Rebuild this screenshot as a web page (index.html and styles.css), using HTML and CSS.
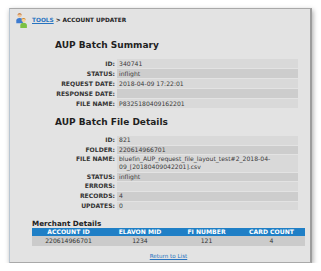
FILE: index.html
```html
<!DOCTYPE html>
<html>
<head>
<meta charset="utf-8">
<link rel="stylesheet" href="styles.css">
</head>
<body>
<div class="panel">
  <div class="crumbs">
    <svg class="icon" width="12" height="15" viewBox="0 0 12 15">
      <circle cx="3.6" cy="2.3" r="2.1" fill="#f1c79b"/>
      <path d="M1.5 2.2 Q1.6 0.2 3.6 0.2 Q5.6 0.2 5.7 2.2 Q4.6 1.2 3.6 1.4 Q2.4 1.2 1.5 2.2Z" fill="#b5652a"/>
      <path d="M0.3 10.2 V7.6 Q0.3 4.9 3.6 4.9 Q6.9 4.9 6.9 7.6 V10.2 Z" fill="#3d7bd0"/>
      <circle cx="7.6" cy="7" r="2.1" fill="#f6cf98"/>
      <path d="M5.5 6.9 Q5.6 4.9 7.6 4.9 Q9.6 4.9 9.7 6.9 Q8.6 5.9 7.6 6.1 Q6.4 5.9 5.5 6.9Z" fill="#d08a2c"/>
      <path d="M4.3 15 V12.4 Q4.3 9.7 7.6 9.7 Q10.9 9.7 10.9 12.4 V15 Z" fill="#7cc144"/>
    </svg>
    <span class="crumb-text"><a class="crumb-link" href="#">TOOLS</a> &gt; ACCOUNT UPDATER</span>
  </div>

  <h1 class="title title-first">AUP Batch Summary</h1>
  <div class="details">
    <div class="label">ID:</div><div class="value light">340741</div>
    <div class="label">STATUS:</div><div class="value dark">inflight</div>
    <div class="label">REQUEST DATE:</div><div class="value light">2018-04-09 17:22:01</div>
    <div class="label">RESPONSE DATE:</div><div class="value dark"></div>
    <div class="label">FILE NAME:</div><div class="value light">P8325180409162201</div>
  </div>

  <h1 class="title title-second">AUP Batch File Details</h1>
  <div class="details details-file">
    <div class="label">ID:</div><div class="value light">821</div>
    <div class="label">FOLDER:</div><div class="value dark">220614966701</div>
    <div class="label">FILE NAME:</div><div class="value light wrap">bluefin_AUP_request_file_layout_test#2_2018-04-09_[20180409042201].csv</div>
    <div class="label">STATUS:</div><div class="value dark">inflight</div>
    <div class="label">ERRORS:</div><div class="value light"></div>
    <div class="label">RECORDS:</div><div class="value dark">4</div>
    <div class="label">UPDATES:</div><div class="value light">0</div>
  </div>

  <div class="merchant">
    <h2 class="merchant-title">Merchant Details</h2>
    <table class="mtable">
      <colgroup><col class="c1"><col class="c2"><col class="c3"><col class="c4"></colgroup>
      <thead>
        <tr><th>ACCOUNT ID</th><th>ELAVON MID</th><th>FI NUMBER</th><th>CARD COUNT</th></tr>
      </thead>
      <tbody>
        <tr><td>220614966701</td><td>1234</td><td>121</td><td>4</td></tr>
      </tbody>
    </table>
    <div class="return"><a class="return-link" href="#">Return to List</a></div>
  </div>
</div>
</body>
</html>
```

FILE: styles.css
```css
html, body {
  margin: 0;
  padding: 0;
  background: #ffffff;
}
body {
  padding: 8px 0 0 9px;
  font-family: "DejaVu Sans", Verdana, sans-serif;
  color: #2a2a2a;
}
.panel {
  box-sizing: border-box;
  width: 303px;
  height: 255px;
  background: #e3e3e3;
  border: 1px solid #a9a9a9;
  border-right: 2px solid #9d9d9d;
  border-left-color: #b9c6d2;
  box-shadow: 1px 2px 5px rgba(0, 0, 0, 0.35);
  overflow: hidden;
}
.crumbs {
  display: flex;
  align-items: center;
  padding: 4px 0 0 6px;
  height: 15px;
}
.icon {
  display: block;
  flex: none;
}
.crumb-text {
  margin-left: 4px;
  font-size: 5.8px;
  font-weight: bold;
  color: #222;
  margin-top: -1px;
}
.crumb-link {
  color: #2773c0;
}
.title {
  margin: 0;
  font-size: 9px;
  line-height: 11px;
  font-weight: bold;
  color: #1f1f1f;
  padding-left: 45px;
}
.title-first {
  margin-top: 12px;
}
.title-second {
  margin-top: 9px;
}
.details {
  display: grid;
  grid-template-columns: 59px 181px;
  column-gap: 2px;
  row-gap: 1px;
  margin: 8px 0 0 46px;
  font-size: 6.1px;
  line-height: 9px;
}
.details-file {
  line-height: 8.6px;
}
.label {
  text-align: right;
  font-weight: bold;
  color: #333;
}
.value {
  padding-left: 2px;
  color: #3a3a3a;
  min-height: 8.6px;
}
.wrap {
  line-height: 8px;
  padding-top: 0.3px;
  padding-bottom: 0.3px;
}
.light {
  background: #d9d9d9;
}
.dark {
  background: #cdcdcd;
}
.merchant {
  margin: 9px 0 0 22px;
  width: 273px;
}
.merchant-title {
  margin: 0;
  font-size: 7.2px;
  line-height: 9px;
  font-weight: bold;
  color: #1f1f1f;
}
.mtable {
  width: 273px;
  border-collapse: collapse;
  table-layout: fixed;
  margin-top: 0;
  font-size: 6.1px;
}
.c1 { width: 73px; }
.c2 { width: 70px; }
.c3 { width: 63px; }
.c4 { width: 67px; }
.mtable th {
  background: #1f7fc6;
  color: #ffffff;
  font-weight: bold;
  height: 8px;
  padding: 0;
  line-height: 8px;
  text-align: center;
}
.mtable td {
  background: #cbcbcb;
  color: #333;
  height: 10px;
  padding: 0;
  line-height: 10px;
  text-align: center;
}
.return {
  text-align: center;
  margin-top: 6px;
  font-size: 5.6px;
  line-height: 8px;
}
.return-link {
  color: #2773c0;
}
```
